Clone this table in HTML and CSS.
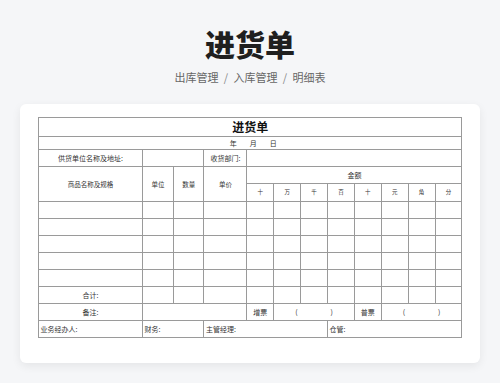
FILE: index.html
```html
<!DOCTYPE html>
<html lang="zh">
<head>
<meta charset="utf-8">
<title>进货单</title>
<link rel="stylesheet" href="styles.css">
</head>
<body>
<header class="head">
  <h1 class="title">进货单</h1>
  <nav class="crumbs">出库管理<span class="sep">/</span>入库管理<span class="sep">/</span>明细表</nav>
</header>
<main class="card">
  <table class="sheet">
    <colgroup>
      <col class="c-name"><col class="c-unit"><col class="c-qty"><col class="c-price">
      <col class="c-d"><col class="c-d"><col class="c-d"><col class="c-d">
      <col class="c-d"><col class="c-d"><col class="c-d"><col class="c-d">
    </colgroup>
    <tr class="r-title"><td colspan="12" class="sheet-title">进货单</td></tr>
    <tr class="r-date"><td colspan="12" class="date">年<span class="gap"></span>月<span class="gap"></span>日</td></tr>
    <tr class="r-row"><td>供货单位名称及地址:</td><td colspan="2"></td><td>收货部门:</td><td colspan="8"></td></tr>
    <tr class="r-row"><td rowspan="2" class="hd">商品名称及规格</td><td rowspan="2" class="hd">单位</td><td rowspan="2" class="hd">数量</td><td rowspan="2" class="hd">单价</td><td colspan="8">金额</td></tr>
    <tr class="r-h2"><td class="dg">十</td><td class="dg">万</td><td class="dg">千</td><td class="dg">百</td><td class="dg">十</td><td class="dg">元</td><td class="dg">角</td><td class="dg">分</td></tr>
    <tr class="r-data"><td></td><td></td><td></td><td></td><td></td><td></td><td></td><td></td><td></td><td></td><td></td><td></td></tr>
    <tr class="r-data"><td></td><td></td><td></td><td></td><td></td><td></td><td></td><td></td><td></td><td></td><td></td><td></td></tr>
    <tr class="r-data"><td></td><td></td><td></td><td></td><td></td><td></td><td></td><td></td><td></td><td></td><td></td><td></td></tr>
    <tr class="r-data"><td></td><td></td><td></td><td></td><td></td><td></td><td></td><td></td><td></td><td></td><td></td><td></td></tr>
    <tr class="r-data"><td></td><td></td><td></td><td></td><td></td><td></td><td></td><td></td><td></td><td></td><td></td><td></td></tr>
    <tr class="r-total"><td>合计:</td><td></td><td></td><td></td><td></td><td></td><td></td><td></td><td></td><td></td><td></td><td></td></tr>
    <tr class="r-row"><td>备注:</td><td colspan="3"></td><td>增票</td><td colspan="3"><div class="paren"><span>(</span><span>)</span></div></td><td>普票</td><td colspan="3"><div class="paren"><span>(</span><span>)</span></div></td></tr>
    <tr class="r-row foot"><td>业务经办人:</td><td colspan="2">财务:</td><td colspan="4">主管经理:</td><td colspan="5">仓管:</td></tr>
  </table>
</main>
</body>
</html>
```
FILE: styles.css
```css
html, body {
  margin: 0;
  padding: 0;
}
body {
  background: #f5f6f8;
  font-family: "Noto Sans CJK SC", "Noto Sans", sans-serif;
  color: #222;
  width: 500px;
  height: 383px;
  overflow: hidden;
}
.head {
  padding-top: 25px;
  text-align: center;
}
.title {
  margin: 0;
  font-size: 30px;
  line-height: 36px;
  font-weight: 900;
  color: #1f1f1f;
}
.crumbs {
  margin-top: 8px;
  font-size: 11px;
  line-height: 16px;
  color: #666;
}
.sep {
  display: inline-block;
  width: 15px;
  text-align: center;
  color: #888;
}
.card {
  margin: 19px auto 0;
  width: 460px;
  box-sizing: border-box;
  padding: 13px 18px 25px;
  background: #fff;
  border-radius: 6px;
  box-shadow: 0 3px 10px rgba(0, 0, 0, 0.07);
}
.sheet {
  width: 423.4px;
  table-layout: fixed;
  border-collapse: collapse;
  font-size: 7px;
  color: #333;
}
.c-name { width: 104px; }
.c-unit { width: 31px; }
.c-qty { width: 30.4px; }
.c-price { width: 43px; }
.c-d { width: 26.875px; }
.sheet td {
  border: 1px solid #9a9a9a;
  padding: 0;
  text-align: center;
  vertical-align: middle;
  line-height: 1;
  white-space: nowrap;
  overflow: hidden;
}
.r-title td { height: 18px; }
.r-date td { height: 12px; }
.r-row td { height: 16px; }
.r-h2 td { height: 16.5px; }
.r-data td { height: 16.2px; }
.r-total td { height: 15.8px; }
.sheet-title {
  font-size: 12px;
  font-weight: 700;
  color: #111;
}
.date {
  padding-left: 6px !important;
}
.gap {
  display: inline-block;
  width: 13px;
}
.hd { font-size: 6.5px; }
.dg { font-size: 5.5px; }
.paren {
  display: flex;
  justify-content: space-between;
  padding: 0 21px;
}
.foot td {
  text-align: left;
  padding-left: 1.5px;
}
```
